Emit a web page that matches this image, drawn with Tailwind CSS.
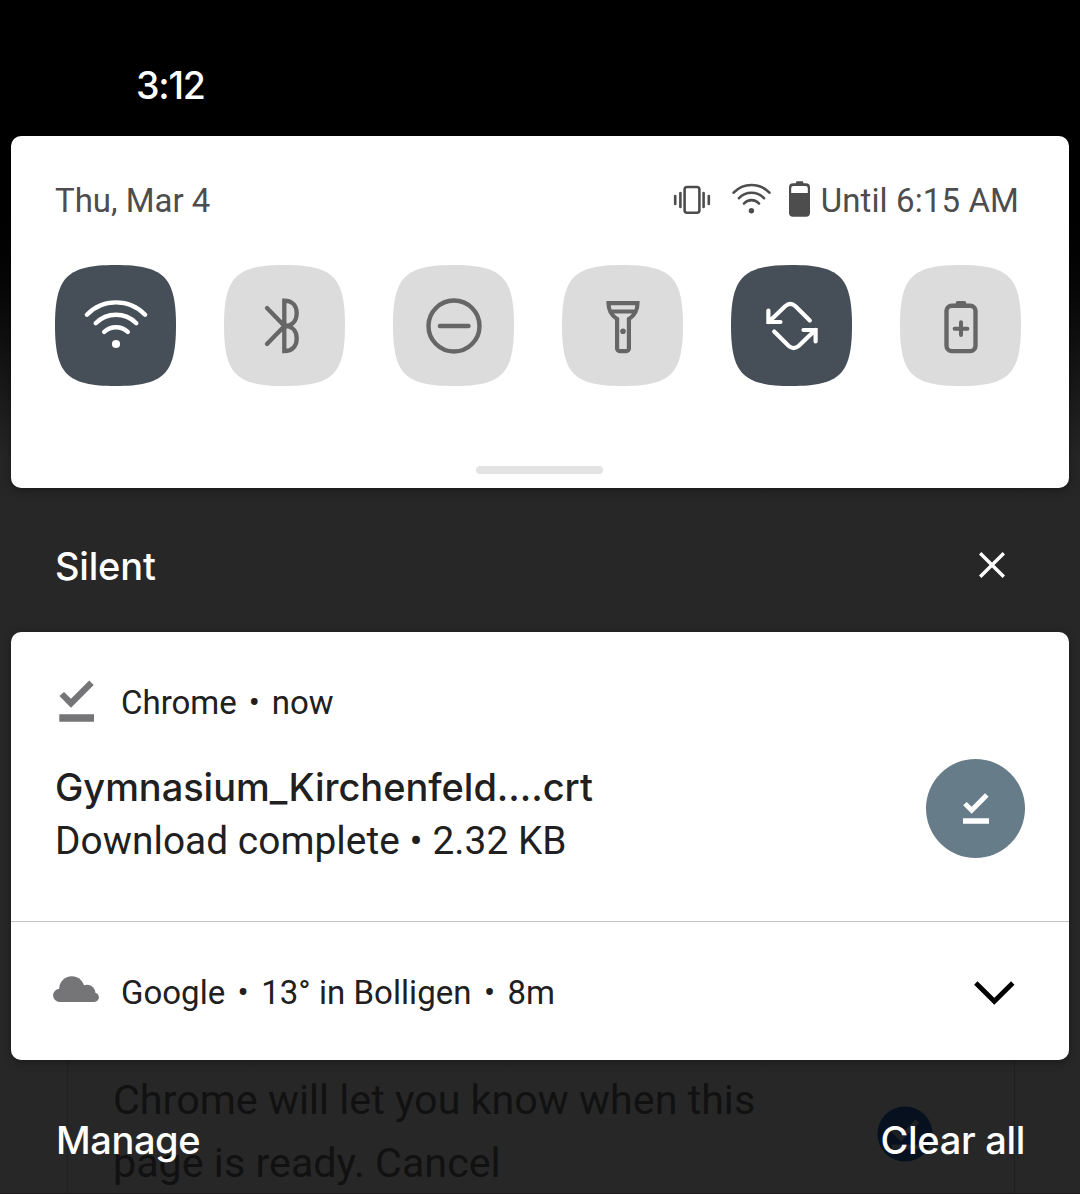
<!DOCTYPE html>
<html lang="en">
<head>
<meta charset="utf-8">
<title>Notification shade</title>
<script src="https://cdn.jsdelivr.net/npm/@tailwindcss/browser@4"></script>
</head>
<body class="bg-black">
<main class="relative isolate flex h-[1194px] w-[1080px] flex-col overflow-hidden bg-[#272727] font-['Roboto',sans-serif] text-[33px] text-[#202020]">

  <!-- dimmed page behind the shade -->
  <div class="absolute inset-0 -z-10 bg-linear-to-b from-black from-[11%] via-[#252525] via-[38%] to-[#272727] to-[43%]">
    <div class="absolute top-[1000px] left-[67px] h-[194px] w-[948px] border-x border-[#202020]"></div>
    <p class="absolute top-[1069px] left-[113px] w-[660px] text-[41.25px] leading-[63px] text-[#111111]">Chrome will let you know when this<br>page is ready. Cancel</p>
    <svg class="absolute top-[1106px] left-[877px]" width="56" height="56" viewBox="0 0 56 56" fill="none">
      <circle cx="28" cy="28" r="27.5" fill="#06101f"/>
      <path d="M16 24l8 8 16.500-17M15 41h27" stroke="#1f2024" stroke-width="5"/>
    </svg>
    <div class="absolute bottom-0 left-0 h-px w-full bg-[#1f191b]"></div>
  </div>

  <!-- status bar -->
  <header class="h-[136px] pt-[65px] pl-[136px] font-['Inter',sans-serif] text-[37.5px] leading-[41px] font-medium tracking-[-1.2px] text-white">3:12</header>

  <!-- quick settings -->
  <section class="mx-[11px] flex h-[352px] flex-col rounded-[10px] bg-white pt-[44px] shadow-[0_2px_8px_rgba(0,0,0,0.35)]">
    <div class="flex h-[41px] items-center pr-[50px] pl-[44px] leading-[41px] text-[#4d4d4d]">
      <span>Thu, Mar 4</span>
      <div class="ml-auto flex items-start">
        <svg width="40" height="40" viewBox="0 0 40 40" fill="none" stroke="currentColor" stroke-width="2.6">
          <rect x="12.600" y="7" width="14.800" height="25.700" rx="2.500"/>
          <path d="M8.400 13v14M3.200 16v8M31.600 13v14M36.800 16v8" stroke-linecap="round"/>
        </svg>
        <svg class="ml-[19px]" width="41" height="40" viewBox="0 0 41 40" fill="none" stroke="currentColor" stroke-width="2.600" stroke-linecap="round">
          <path d="M2.600 12.700A24.500 24.500 0 0 1 38.400 12.700M8 18.200A17 17 0 0 1 33 18.200M13 23.500A10 10 0 0 1 28 23.500"/>
          <circle cx="20.400" cy="30.700" r="2.700" fill="currentColor" stroke="none"/>
        </svg>
        <svg class="ml-[14px]" width="26" height="40" viewBox="0 0 26 40" fill="currentColor">
          <path d="M10.500 1.300h6.300l.8 2h2.400a4 4 0 0 1 4 4v25.400a4 4 0 0 1-4 4H7a4 4 0 0 1-4-4V7.300a4 4 0 0 1 4-4h2.700zM7.500 6A2.300 2.300 0 0 0 5.200 8.300V13H21.800V8.300A2.300 2.300 0 0 0 19.500 6z" fill-rule="evenodd"/>
        </svg>
        <span class="ml-[9px] tracking-[0.12px]">Until 6:15 AM</span>
      </div>
    </div>

    <div class="mt-[44px] flex gap-[48px] pl-[44px]">
      <svg width="121" height="121" viewBox="0 0 121 121" fill="none">
        <path d="M60.500 0C108.900 0 121 12.100 121 60.500S108.900 121 60.500 121 0 108.900 0 60.500 12.100 0 60.500 0z" fill="#464e57"/>
        <path d="M31.900 49.700A40.500 40.500 0 0 1 90.100 49.700M40.700 58.200A28.500 28.500 0 0 1 81.300 58.200M49.200 66.900A17.300 17.300 0 0 1 72.800 66.900" stroke="#fff" stroke-width="4.400" stroke-linecap="round"/>
        <circle cx="61" cy="79" r="4.100" fill="#fff"/>
      </svg>
      <svg width="121" height="121" viewBox="0 0 121 121" fill="none">
        <path d="M60.500 0C108.900 0 121 12.100 121 60.500S108.900 121 60.500 121 0 108.900 0 60.500 12.100 0 60.500 0z" fill="#dcdcdc"/>
        <path d="M60.300 35.600V86.100M43 43L60.500 60.900 43 79M60.300 35.600C68.500 35.600 72.700 41 72.700 48.200S68.500 60.900 60.500 60.900C68.500 60.900 72.700 66.300 72.700 73.500S68.500 86.100 60.300 86.100z" stroke="#666" stroke-width="4.300" stroke-linecap="round"/>
      </svg>
      <svg width="121" height="121" viewBox="0 0 121 121" fill="none" stroke="#666" stroke-width="4.400">
        <path d="M60.500 0C108.900 0 121 12.100 121 60.500S108.900 121 60.500 121 0 108.900 0 60.500 12.100 0 60.500 0z" fill="#dcdcdc" stroke="none"/>
        <circle cx="61" cy="61" r="25.500"/>
        <path d="M46.900 61H75.500" stroke-linecap="round"/>
      </svg>
      <svg width="121" height="121" viewBox="0 0 121 121" fill="none" stroke="#666" stroke-width="4.200">
        <path d="M60.500 0C108.900 0 121 12.100 121 60.500S108.900 121 60.500 121 0 108.900 0 60.500 12.100 0 60.500 0z" fill="#dcdcdc" stroke="none"/>
        <path d="M46.500 38.100H75.500C75.500 46.500 72.500 50.500 66.900 54V83.600a2.500 2.500 0 0 1-2.500 2.500H57.600a2.500 2.500 0 0 1-2.500-2.500V54C49.500 50.500 46.500 46.500 46.500 38.100zM47.500 46.500H74.500"/>
        <circle cx="61" cy="66.300" r="2.800" fill="#666" stroke="none"/>
      </svg>
      <svg width="121" height="121" viewBox="0 0 121 121" fill="none" stroke="#fff" stroke-width="4.200" stroke-linecap="round">
        <path d="M60.500 0C108.900 0 121 12.100 121 60.500S108.900 121 60.500 121 0 108.900 0 60.500 12.100 0 60.500 0z" fill="#464e57" stroke="none"/>
        <path d="M78.800 55.500L64.500 41.200Q59.300 36.600 54.100 41.200L37.700 57M37.400 45.500V57H49.500M43.200 66.500L57.500 80.800Q62.700 85.400 67.900 80.800L84.300 65M84.600 76.500V65H72.500"/>
      </svg>
      <svg width="121" height="121" viewBox="0 0 121 121" fill="none" stroke="#666" stroke-width="4.400">
        <path d="M60.500 0C108.900 0 121 12.100 121 60.500S108.900 121 60.500 121 0 108.900 0 60.500 12.100 0 60.500 0z" fill="#dcdcdc" stroke="none"/>
        <rect x="46.500" y="40.700" width="29" height="45.400" rx="5.300"/>
        <path d="M55.700 39v-1a2 2 0 0 1 2-2h6.600a2 2 0 0 1 2 2v1z" fill="#666" stroke="none"/>
        <path d="M61 57.300V70.100M54.600 63.700H67.400" stroke-width="4" stroke-linecap="round"/>
      </svg>
    </div>
    <div class="mt-[80px] ml-[465px] h-[8px] w-[127px] rounded-full bg-[#e3e3e3]"></div>
  </section>

  <!-- section header -->
  <div class="flex h-[144px] items-center justify-between pt-[12px] pr-[73px] pl-[55px] font-['Inter',sans-serif] text-[38px] font-medium text-white">
    <h2 class="tracking-[-0.2px]">Silent</h2>
    <svg class="mb-[2px]" width="30" height="30" viewBox="0 0 30 30" fill="none" stroke="#fff" stroke-width="3.400"><path d="M3.200 3.200L26.800 26.800M26.800 3.200L3.200 26.800"/></svg>
  </div>

  <!-- notifications -->
  <section class="mx-[11px] h-[428px] rounded-[10px] bg-white shadow-[0_2px_8px_rgba(0,0,0,0.35)]">
    <article class="h-[290px] border-b border-[#c4c4c4] pt-[50px] pr-[44px] pl-[44px]">
      <div class="flex h-[41px] items-center leading-[41px]">
        <svg class="mr-[26px] mb-[3px] ml-[4px]" width="36" height="42" viewBox="0 0 36 42" fill="#757577"><path d="M.4 16L5 12l7 6.700L30.200.4l4.500 4.600L12 27.700zM.3 34.300H35v7.400H.3z"/></svg>
        <span>Chrome</span><span class="w-[35px] text-center">•</span><span>now</span>
      </div>
      <div class="mt-[36px] flex items-start justify-between">
        <div>
          <h3 class="pt-px font-['Inter',sans-serif] text-[38px] leading-[54px] font-medium tracking-[-0.05px]">Gymnasium_Kirchenfeld....crt</h3>
          <p class="text-[38.8px] leading-[54px] tracking-[0.06px]">Download complete • 2.32 KB</p>
        </div>
        <svg width="99" height="99" viewBox="0 0 99 99"><circle cx="49.500" cy="49.500" r="49.500" fill="#677c89"/><path fill="#fff" d="M37.200 46.300L40.700 43l5 4.800L59 34.300l3.600 3.500L45.700 54.800zM37 59.300h26v5.400H37z"/></svg>
      </div>
    </article>
    <article class="flex h-[138px] items-center pt-[2px] pr-[54px] pl-[42px] leading-[41px]">
      <svg class="mr-[22px] mb-[7px]" width="46" height="26" viewBox="0 0 46 26" fill="#757577"><circle cx="6.700" cy="19.300" r="6.600"/><circle cx="18.800" cy="13" r="12.700"/><circle cx="34" cy="17.300" r="8.500"/><circle cx="41.300" cy="21.300" r="4.600"/><path d="M6.700 14H40v4L41.300 25.900H6.700z"/></svg>
      <span>Google</span><span class="w-[36px] text-center">•</span><span class="tracking-[0.04px]">13° in Bolligen</span><span class="w-[36px] text-center">•</span><span>8m</span>
      <svg class="ml-auto" width="42" height="26" viewBox="0 0 42 26" fill="none" stroke="#000" stroke-width="4.800"><path d="M2.800 4L21.300 22.300 39.800 4"/></svg>
    </article>
  </section>

  <footer class="flex h-[134px] items-center justify-between pt-[26px] pr-[55px] pl-[56px] font-['Inter',sans-serif] text-[38px] font-medium tracking-[-0.4px] text-white">
    <span>Manage</span><span class="tracking-[-0.3px]">Clear all</span>
  </footer>
</main>
</body>
</html>
